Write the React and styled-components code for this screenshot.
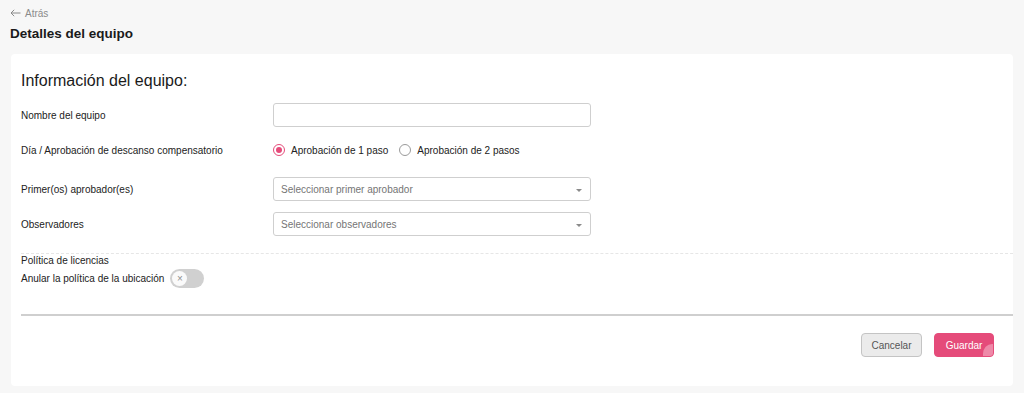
import React, { useState } from 'react';
import styled, { createGlobalStyle } from 'styled-components';

const GlobalStyle = createGlobalStyle`
  body {
    margin: 0;
    background: #f7f7f7;
    font-family: "Liberation Sans", Arial, sans-serif;
    color: #1f1f1f;
  }
`;

const Page = styled.div`
  padding: 6px 11px 7px 11px;
`;

const Back = styled.a`
  display: flex;
  align-items: center;
  gap: 4px;
  font-size: 10px;
  color: #8a8a8a;
  height: 14px;
  margin-left: -1px;
`;

const PageTitle = styled.h1`
  margin: 4px 0 0 -1px;
  font-size: 13.5px;
  font-weight: 700;
  color: #1a1a1a;
  height: 20px;
  line-height: 20px;
`;

const Card = styled.div`
  margin-top: 10px;
  background: #fff;
  border-radius: 4px;
  padding: 17px 0 0 10px;
  height: 332px;
  box-sizing: border-box;
`;

const CardTitle = styled.h2`
  margin: 0 0 12px;
  font-size: 16px;
  font-weight: 400;
  color: #1a1a1a;
  line-height: 20px;
`;

const Row = styled.div`
  display: grid;
  grid-template-columns: 252px 318px;
  align-items: center;
  height: 24px;
  margin-bottom: ${p => (p.gap === undefined ? 11 : p.gap)}px;
`;

const Label = styled.label`
  font-size: 10px;
  color: #222;
`;

const TextInput = styled.input`
  box-sizing: border-box;
  width: 318px;
  height: 24px;
  border: 1px solid #cfcfcf;
  border-radius: 3px;
  outline: none;
`;

const Radios = styled.div`
  display: flex;
  align-items: center;
  gap: 11px;
`;

const RadioOption = styled.span`
  display: flex;
  align-items: center;
  gap: 6px;
  font-size: 10px;
  color: #222;
  cursor: pointer;
`;

const RadioDot = styled.span`
  box-sizing: border-box;
  width: 12px;
  height: 12px;
  border-radius: 50%;
  border: 1px solid ${p => (p.checked ? '#e54b7a' : '#9a9a9a')};
  display: flex;
  align-items: center;
  justify-content: center;
  &::after {
    content: '';
    width: 6px;
    height: 6px;
    border-radius: 50%;
    background: ${p => (p.checked ? '#e54b7a' : 'transparent')};
  }
`;

const Select = styled.div`
  box-sizing: border-box;
  width: 318px;
  height: 24px;
  border: 1px solid #cfcfcf;
  border-radius: 3px;
  display: flex;
  align-items: center;
  justify-content: space-between;
  padding: 0 8px 0 7px;
  font-size: 10px;
  color: #757575;
`;

const Caret = styled.span`
  width: 0;
  height: 0;
  border-left: 3px solid transparent;
  border-right: 3px solid transparent;
  border-top: 3px solid #8a8a8a;
  margin-top: 2px;
`;

const Dashed = styled.div`
  border-top: 1px dashed #e6e6e6;
  margin-top: 17px;
`;

const Policy = styled.div`
  font-size: 10px;
  color: #222;
  line-height: 14px;
`;

const ToggleRow = styled.div`
  display: flex;
  align-items: center;
  gap: 6px;
  margin-top: 1px;
`;

const Toggle = styled.span`
  box-sizing: border-box;
  width: 34px;
  height: 19px;
  border-radius: 10px;
  background: #d0d0d0;
  padding: 2px;
  display: flex;
  align-items: center;
`;

const Knob = styled.span`
  width: 15px;
  height: 15px;
  border-radius: 50%;
  background: #fafafa;
  display: flex;
  align-items: center;
  justify-content: center;
  font-size: 10px;
  color: #8f8f8f;
  line-height: 1;
`;

const Divider = styled.div`
  height: 2px;
  background: #cfcfcf;
  margin-top: 26px;
`;

const Footer = styled.div`
  display: flex;
  justify-content: flex-end;
  gap: 12px;
  padding: 17px 19px 0 0;
`;

const Button = styled.button`
  position: relative;
  overflow: hidden;
  box-sizing: border-box;
  height: 24px;
  border-radius: 4px;
  font-family: "Liberation Sans", Arial, sans-serif;
  font-size: 10px;
  cursor: pointer;
  width: ${p => p.w}px;
  border: 1px solid ${p => (p.primary ? '#e54b7a' : '#c4c4c4')};
  background: ${p => (p.primary ? '#e54b7a' : '#ebebeb')};
  color: ${p => (p.primary ? '#fff' : '#555')};
`;

// leftover click ripple in the corner of the save button
const Ripple = styled.span`
  position: absolute;
  right: -3px;
  bottom: -2px;
  width: 13px;
  height: 14px;
  border-radius: 70% 30% 0 0;
  background: rgba(255, 255, 255, 0.35);
`;

export default function App() {
  const [steps, setSteps] = useState(1);

  return (
    <>
      <GlobalStyle />
      <Page>
        <Back>
          <svg width="11" height="8" viewBox="0 0 11 8" fill="none" stroke="#8a8a8a" strokeWidth="1">
            <path d="M10.5 4H1M4.2 0.8L1 4l3.2 3.2" />
          </svg>
          Atrás
        </Back>
        <PageTitle>Detalles del equipo</PageTitle>
        <Card>
          <CardTitle>Información del equipo:</CardTitle>
          <Row gap={11}>
            <Label>Nombre del equipo</Label>
            <TextInput />
          </Row>
          <Row gap={15}>
            <Label>Día / Aprobación de descanso compensatorio</Label>
            <Radios>
              <RadioOption onClick={() => setSteps(1)}>
                <RadioDot checked={steps === 1} />
                Aprobación de 1 paso
              </RadioOption>
              <RadioOption onClick={() => setSteps(2)}>
                <RadioDot checked={steps === 2} />
                Aprobación de 2 pasos
              </RadioOption>
            </Radios>
          </Row>
          <Row gap={11}>
            <Label>Primer(os) aprobador(es)</Label>
            <Select>
              Seleccionar primer aprobador
              <Caret />
            </Select>
          </Row>
          <Row gap={0}>
            <Label>Observadores</Label>
            <Select>
              Seleccionar observadores
              <Caret />
            </Select>
          </Row>
          <Dashed />
          <Policy>
            Política de licencias
            <ToggleRow>
              Anular la política de la ubicación
              <Toggle>
                <Knob>×</Knob>
              </Toggle>
            </ToggleRow>
          </Policy>
          <Divider />
          <Footer>
            <Button w={61}>Cancelar</Button>
            <Button primary w={60}>
              Guardar
              <Ripple />
            </Button>
          </Footer>
        </Card>
      </Page>
    </>
  );
}
